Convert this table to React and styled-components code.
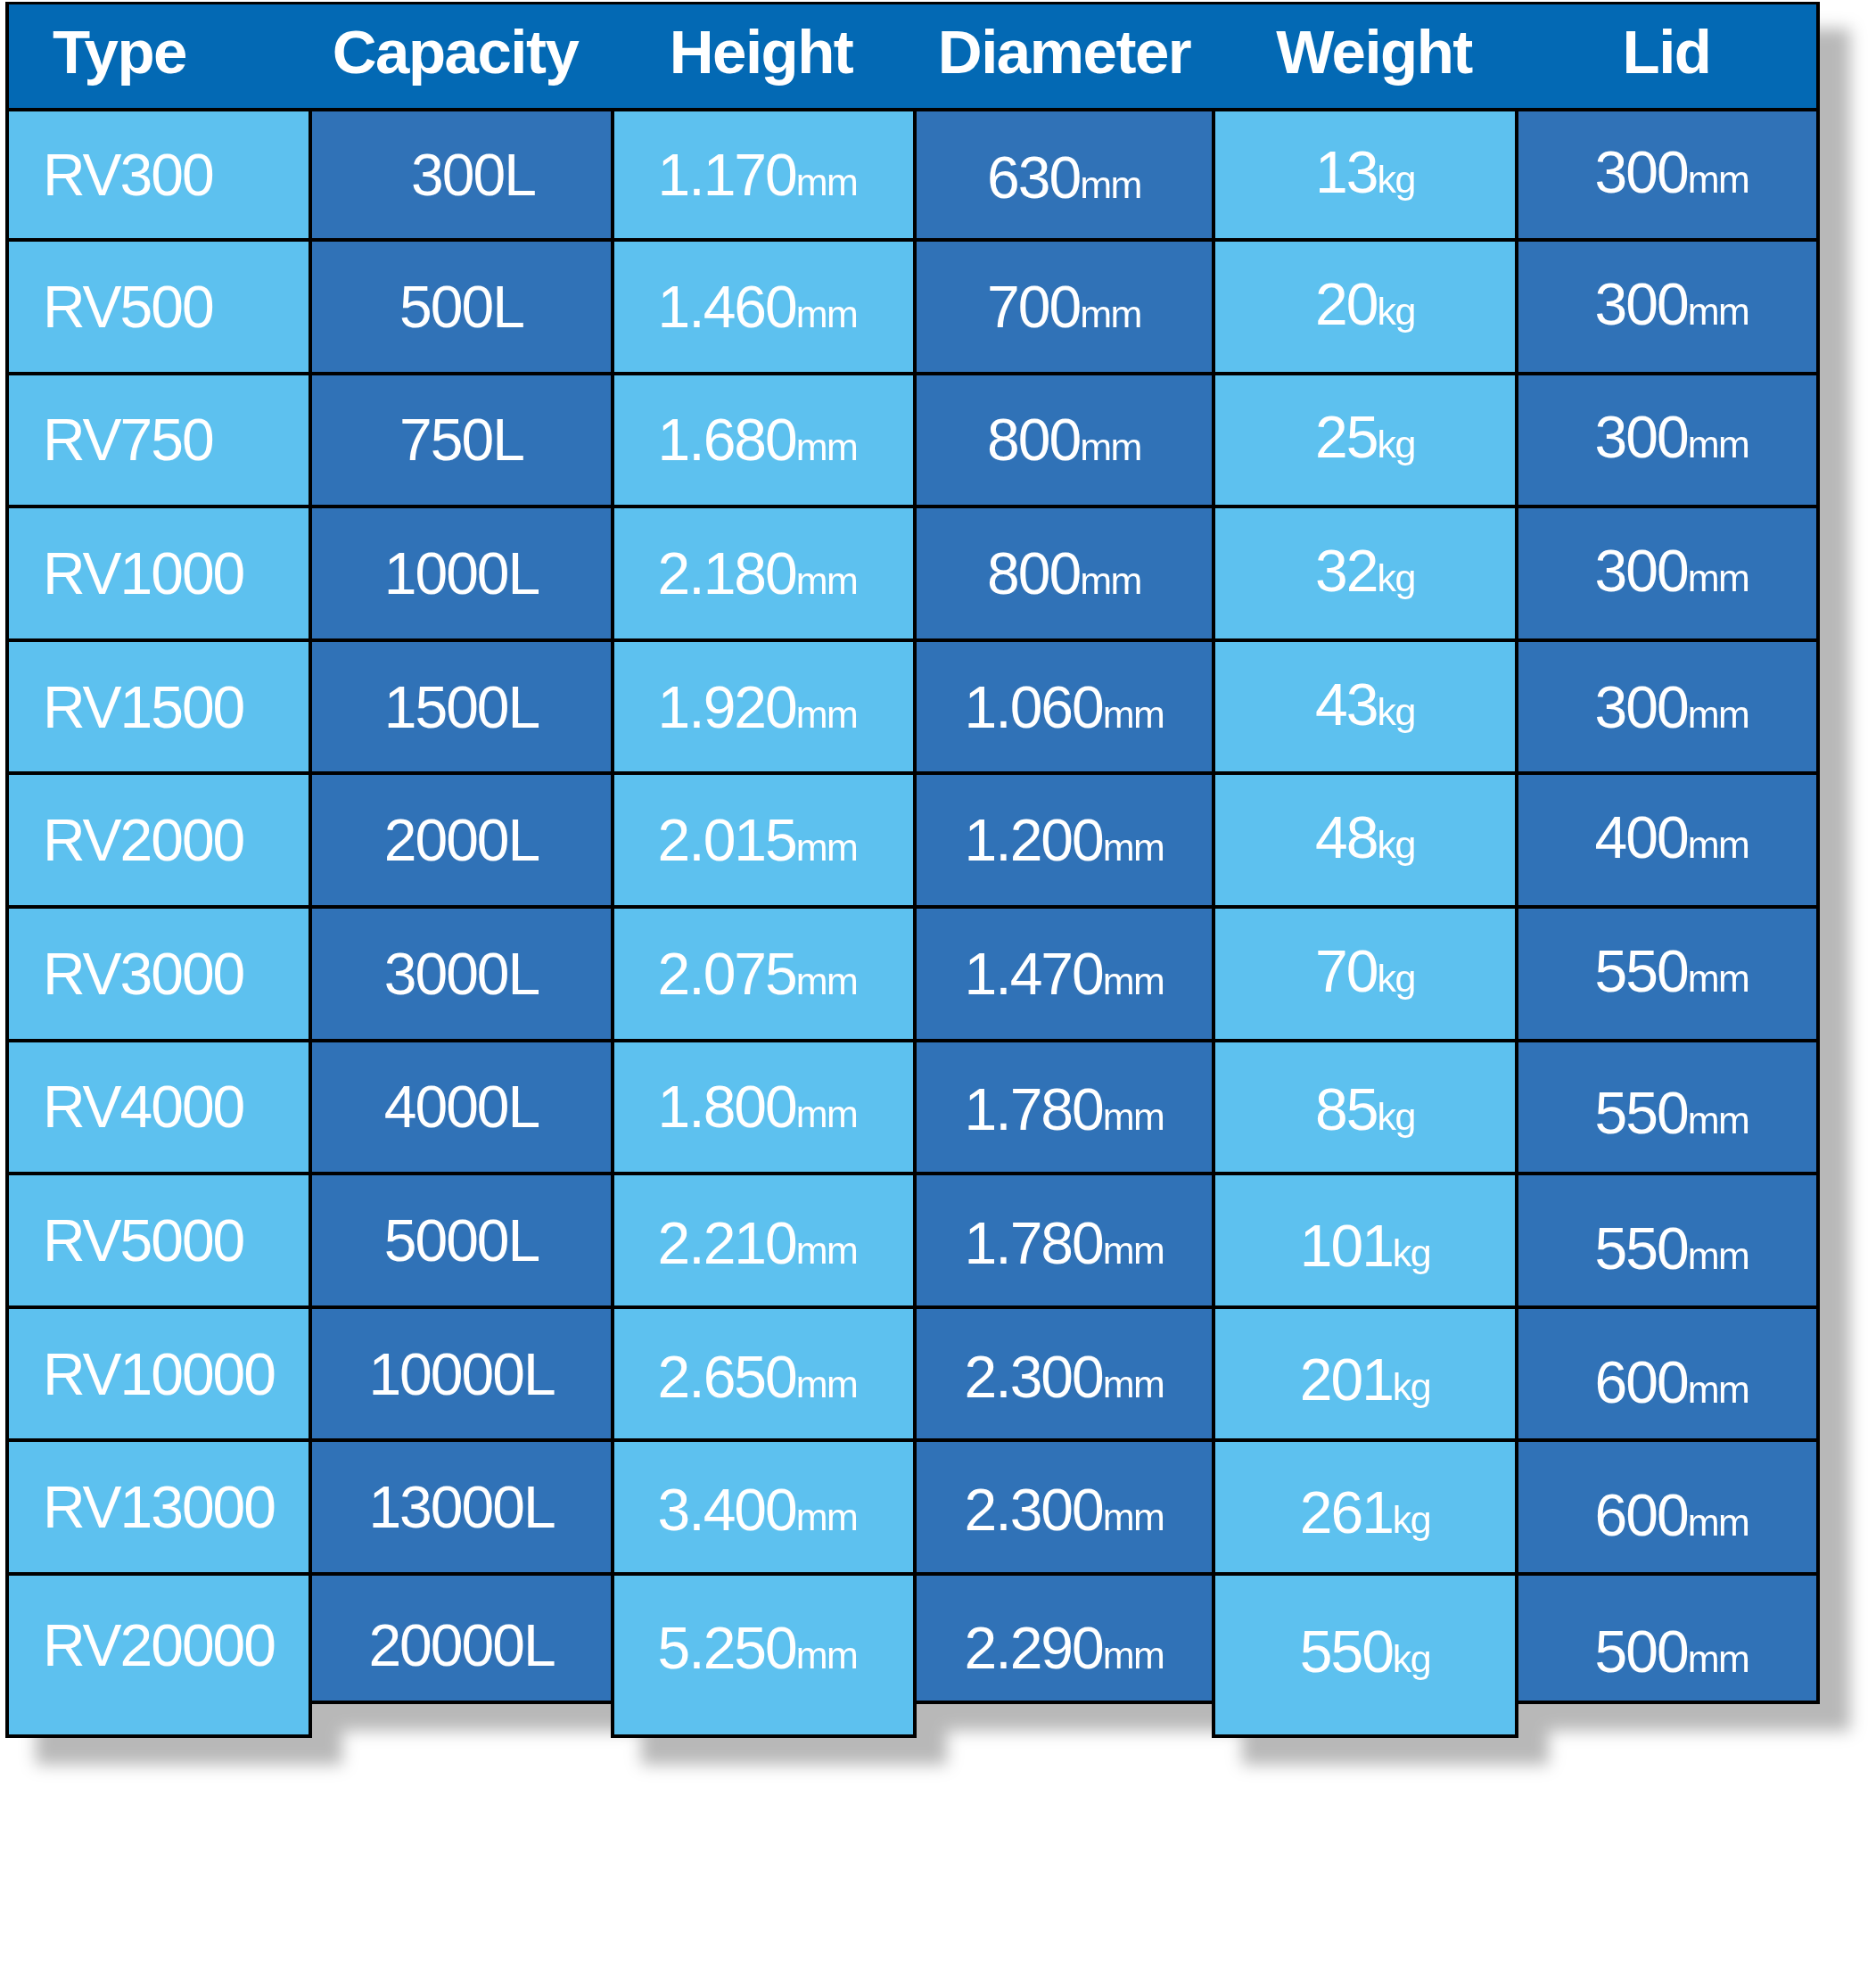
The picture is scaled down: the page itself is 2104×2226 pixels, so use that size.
import React from 'react';
import styled, { createGlobalStyle } from 'styled-components';

const GlobalStyle = createGlobalStyle`
  html, body { margin: 0; padding: 0; background: #ffffff; }
  body { font-family: 'Liberation Sans', Arial, sans-serif; }
`;

const Page = styled.div`
  box-sizing: border-box;
  min-height: 2226px;
  padding: 2px 0 0 6px;
`;

const Sheet = styled.div`
  width: 2035px;
  filter: drop-shadow(34px 30px 9px rgba(0, 0, 0, 0.28));
`;

const HeaderBar = styled.div`
  display: grid;
  grid-template-columns: 340px 335px 343px 331px 344px 334px;
  box-sizing: border-box;
  height: 123px;
  border: 4px solid #000;
  border-top-width: 3px;
  background: #0369b4;
`;

const HeaderCell = styled.div`
  display: flex;
  align-items: center;
  justify-content: ${p => (p.$left ? 'flex-start' : 'center')};
  padding: 0 ${p => p.$padR || 0}px 10px ${p => p.$padL || 0}px;
  color: #fff;
  font-family: 'Liberation Sans', Arial, sans-serif;
  font-weight: 700;
  font-size: 69px;
  letter-spacing: -1.5px;
  line-height: 1;
  white-space: nowrap;
`;

const Body = styled.div`
  display: grid;
  grid-template-columns: 344px 335px 343px 331px 344px 338px;
  align-items: start;
`;

const Column = styled.div`
  box-sizing: border-box;
  display: flex;
  flex-direction: column;
  background: ${p => (p.$light ? '#5dc1ef' : '#3072b7')};
  border-bottom: 4px solid #000;
  ${p => (p.$light ? 'border-left: 4px solid #000; border-right: 4px solid #000;' : '')}
  ${p => (p.$last ? 'border-right: 4px solid #000;' : '')}
`;

const Cell = styled.div`
  box-sizing: border-box;
  height: ${p => p.$h}px;
  display: flex;
  align-items: center;
  justify-content: ${p => (p.$left ? 'flex-start' : 'center')};
  border-top: ${p => (p.$first ? 0 : 4)}px solid #000;
  padding: ${p => p.$pt}px ${p => p.$pr}px ${p => p.$pb}px ${p => p.$pl}px;
  color: #fff;
  font-family: 'Liberation Sans', Arial, sans-serif;
  font-size: 66px;
  letter-spacing: -2px;
  line-height: 1;
  white-space: nowrap;
`;

const Unit = styled.span`
  font-size: 43px;
  letter-spacing: -1.5px;
`;

const headers = [
  { t: 'Type', left: true, padL: 49 },
  { t: 'Capacity', padR: 14 },
  { t: 'Height', padR: 6 },
  { t: 'Diameter', padL: 0 },
  { t: 'Weight', padL: 20 },
  { t: 'Lid', padR: 2 },
];

/* horizontal padding (left, right) of the body cells per column */
const colPad = [
  [38, 0],
  [0, 0],
  [0, 14],
  [0, 0],
  [0, 0],
  [10, 0],
];

const rows = [
  ['RV300', '300L', ['1.170', 'mm'], ['630', 'mm'], ['13', 'kg'], ['300', 'mm']],
  ['RV500', '500L', ['1.460', 'mm'], ['700', 'mm'], ['20', 'kg'], ['300', 'mm']],
  ['RV750', '750L', ['1.680', 'mm'], ['800', 'mm'], ['25', 'kg'], ['300', 'mm']],
  ['RV1000', '1000L', ['2.180', 'mm'], ['800', 'mm'], ['32', 'kg'], ['300', 'mm']],
  ['RV1500', '1500L', ['1.920', 'mm'], ['1.060', 'mm'], ['43', 'kg'], ['300', 'mm']],
  ['RV2000', '2000L', ['2.015', 'mm'], ['1.200', 'mm'], ['48', 'kg'], ['400', 'mm']],
  ['RV3000', '3000L', ['2.075', 'mm'], ['1.470', 'mm'], ['70', 'kg'], ['550', 'mm']],
  ['RV4000', '4000L', ['1.800', 'mm'], ['1.780', 'mm'], ['85', 'kg'], ['550', 'mm']],
  ['RV5000', '5000L', ['2.210', 'mm'], ['1.780', 'mm'], ['101', 'kg'], ['550', 'mm']],
  ['RV10000', '10000L', ['2.650', 'mm'], ['2.300', 'mm'], ['201', 'kg'], ['600', 'mm']],
  ['RV13000', '13000L', ['3.400', 'mm'], ['2.300', 'mm'], ['261', 'kg'], ['600', 'mm']],
  ['RV20000', '20000L', ['5.250', 'mm'], ['2.290', 'mm'], ['550', 'kg'], ['500', 'mm']],
];

/* small vertical nudges (px) of the text per row / column, as in the picture */
const nudges = [
  [0, 0, 0, 3, -3, -3],
  [0, 0, 0, 0, -3, -3],
  [0, 0, 0, 0, -3, -3],
  [0, 0, 0, 0, -3, -3],
  [0, 0, 0, 0, -3, 0],
  [0, 0, 0, 0, -3, -3],
  [0, 0, 0, 0, -3, -3],
  [0, 0, 0, 3, 3, 7],
  [0, 0, 3, 3, 6, 9],
  [0, 0, 3, 3, 6, 9],
  [0, 0, 3, 3, 6, 9],
  [0, 0, 3, 3, 7, 7],
];

const LIGHT_EXTRA = 38;
const LAST_LIFT = 22;

function cellHeight(r, light) {
  if (r === 0) return 142;
  if (r === rows.length - 1) return 4 + 140 + (light ? LIGHT_EXTRA : 0);
  return 149.6;
}

export default function App() {
  return (
    <Page>
      <GlobalStyle />
      <Sheet>
        <HeaderBar>
          {headers.map(h => (
            <HeaderCell key={h.t} $left={h.left} $padL={h.padL} $padR={h.padR}>
              {h.t}
            </HeaderCell>
          ))}
        </HeaderBar>
        <Body>
          {headers.map((h, c) => {
            const light = c % 2 === 0;
            return (
              <Column key={h.t} $light={light} $last={c === headers.length - 1}>
                {rows.map((row, r) => {
                  const v = row[c];
                  const dy = nudges[r][c];
                  const isLast = r === rows.length - 1;
                  let pt = Math.max(0, dy * 2);
                  let pb = Math.max(0, -dy * 2);
                  if (isLast) {
                    if (light) pb += LAST_LIFT;
                    else pt += LIGHT_EXTRA - LAST_LIFT;
                  }
                  const pl = colPad[c][0] + (c === 1 && r === 0 ? 26 : 0);
                  const pr = colPad[c][1];
                  return (
                    <Cell
                      key={r}
                      $h={cellHeight(r, light)}
                      $first={r === 0}
                      $left={c === 0}
                      $pt={pt}
                      $pb={pb}
                      $pl={pl}
                      $pr={pr}
                    >
                      {Array.isArray(v) ? (
                        <span>
                          {v[0]}
                          <Unit>{v[1]}</Unit>
                        </span>
                      ) : (
                        v
                      )}
                    </Cell>
                  );
                })}
              </Column>
            );
          })}
        </Body>
      </Sheet>
    </Page>
  );
}
